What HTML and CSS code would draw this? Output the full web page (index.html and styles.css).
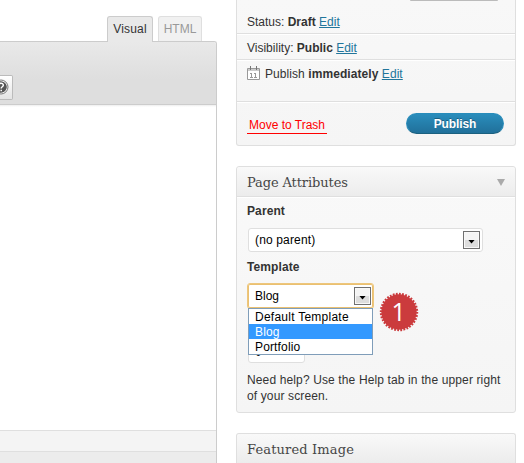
FILE: index.html
```html
<!DOCTYPE html>
<html lang="en">
<head>
<meta charset="utf-8">
<title>Edit Page</title>
<link rel="stylesheet" href="styles.css">
</head>
<body>
<main class="editor-column">
  <nav class="tabs"><a class="tab active">Visual</a><a class="tab">HTML</a></nav>
  <section class="editor">
    <div class="toolbar">
      <button class="help-button" aria-label="Help">
        <svg width="16" height="16" viewBox="0 0 16 16"><circle cx="8" cy="8" r="7" fill="#fff" stroke="#777"/><circle cx="8" cy="8" r="5.8" fill="#555"/><path d="M5.8 6.6c0-3.3 4.6-3 4.5-.3 0 1.5-2.1 1.4-2.1 3.2M8.2 10.8v1.4" fill="none" stroke="#fff" stroke-width="1.5"/></svg>
      </button>
    </div>
    <div class="canvas"></div>
    <div class="path-row"></div>
    <div class="status-row"></div>
  </section>
</main>
<aside class="sidebar">
  <section class="box publish-box">
    <div class="preview-row"><span class="preview-button"></span></div>
    <div class="misc">Status: <b>Draft</b> <a>Edit</a></div>
    <div class="misc">Visibility: <b>Public</b> <a>Edit</a></div>
    <div class="misc schedule">
      <svg class="calendar" width="13" height="14" viewBox="0 0 13 14"><path d="M.5 2.5h12v11H.5z" fill="#fff" stroke="#999"/><path d="M1 3h11v2H1z" fill="#ccc"/><path d="M3.5 0v4M9.5 0v4" stroke="#777"/><path d="M3 7.5h2M4.5 7v4M3 11.5h3M7 7.5h2M8.5 7v4M7 11.5h3" stroke="#999"/></svg>
      <span>Publish <b>immediately</b> <a>Edit</a></span>
    </div>
    <div class="actions"><a class="trash">Move to Trash</a><button class="publish">Publish</button></div>
  </section>
  <section class="box attributes">
    <h3><span class="title-page">Page Attributes</span><i class="toggle"></i></h3>
    <div class="inside">
      <b class="label">Parent</b>
      <div class="select parent"><span>(no parent)</span><i class="arrow"></i></div>
      <b class="label template-label">Template</b>
      <div class="template-area">
        <div class="select template"><span>Blog</span><i class="arrow"></i></div>
        <ul class="options"><li class="default">Default Template</li><li class="selected">Blog</li><li>Portfolio</li></ul>
        <svg class="badge" width="40" height="40" viewBox="-20 -20 40 40"><circle r="17.7" fill="#cb3b3d"/><circle r="18" fill="none" stroke="#cb3b3d" stroke-width="2.4" pathLength="72" stroke-dasharray="1.15 .85"/><text x="-.3" y="8.5" text-anchor="middle">1</text></svg>
      </div>
      <div class="order">0</div>
      <p>Need help? Use the Help tab in the upper right of your screen.</p>
    </div>
  </section>
  <section class="box featured"><h3><span class="title-featured">Featured Image</span></h3></section>
</aside>
</body>
</html>
```
FILE: styles.css
```css
* { box-sizing: border-box; }
body { margin: 0; width: 524px; height: 463px; overflow: hidden; display: flex; gap: 19px; background: #fff; color: #333; font: 12px/16px "Liberation Sans", Arial, sans-serif; }
.editor-column { width: 217px; height: 463px; flex: none; }
.tabs { height: 41px; padding: 16px 15px 0 0; display: flex; justify-content: flex-end; gap: 5px; }
.tab { height: 25px; width: 44px; padding-top: 4px; text-align: center; border: 1px solid #dfdfdf; border-bottom: 0; border-radius: 3px 3px 0 0; background: #f1f1f1; color: #999; }
.tab.active { position: relative; height: 26px; width: 46px; border-color: #ccc; background: #e9e9e9; color: #333; letter-spacing: .2px; }
.editor { height: 422px; border: 1px solid #ccc; border-width: 1px 1px 0 0; border-radius: 0 3px 0 0; }
.toolbar { height: 63px; padding-top: 33px; border-bottom: 1px solid #ccc; background: linear-gradient(#e9e9e9, #dedede 60%); border-radius: 0 2px 0 0; }
.help-button { display: block; width: 13px; height: 25px; padding: 0; border: 1px solid #bbb; border-left: 0; border-radius: 0 2px 2px 0; background: linear-gradient(#fff, #e4e4e4); overflow: hidden; }
.help-button svg { display: block; margin: -1px 0 0 -7.5px; }
.canvas { height: 325px; background: linear-gradient(#eee, #fff 2px); }
.path-row { height: 21px; border-top: 1px solid #dfdfdf; background: #f4f4f4; }
.status-row { height: 12px; border-top: 1px solid #dfdfdf; background: #ececec; }
.sidebar { width: 280px; height: 463px; flex: none; }
.box { border: 1px solid #dfdfdf; border-radius: 3px; background: linear-gradient(#f9f9f9, #f5f5f5); }
.publish-box { height: 146px; border-top: 0; border-radius: 0 0 3px 3px; background: linear-gradient(#f8f8f8, #f5f5f5); }
.preview-row { height: 8px; padding-right: 17px; display: flex; justify-content: flex-end; }
.preview-button { width: 88px; height: 1px; background: #bbb; border-radius: 0 0 5px 5px; }
.misc { height: 26px; padding: 6px 10px 0; border-bottom: 1px solid #dfdfdf; box-shadow: 0 1px #fff; white-space: nowrap; }
a { color: #21759b; }
.misc a { text-decoration: underline; text-underline-offset: 1px; }
.schedule { height: 42px; display: flex; gap: 5px; letter-spacing: .07px; }
.calendar { flex: none; }
.actions { height: 43px; padding: 11px 11px 0 10px; display: flex; justify-content: space-between; }
.trash { width: 80px; height: 17px; margin-top: 4px; padding: 0 2px; color: #f00; border-bottom: 1px solid #f00; white-space: nowrap; }
.publish { width: 98px; height: 21px; padding: 0; border: 1px solid #298cba; border-bottom-color: #1b607f; border-radius: 11px; background: linear-gradient(#2a8dbc, #20709a); color: #fff; font: bold 12px/18px "Liberation Sans", Arial, sans-serif; letter-spacing: -.1px; text-shadow: 0 -1px rgba(0,0,0,.3); }
.attributes { height: 247px; margin-top: 20px; }
h3 { height: 30px; margin: 0; padding: 0 10px; display: flex; justify-content: space-between; border-bottom: 1px solid #dfdfdf; box-shadow: 0 1px #fff; background: linear-gradient(#f9f9f9, #ececec); color: #464646; font: 13px/32px "DejaVu Serif", Georgia, serif; border-radius: 3px 3px 0 0; white-space: nowrap; }
.title-page { letter-spacing: -.1px; }
.title-featured { letter-spacing: .15px; }
.toggle { margin-top: 12px; width: 8px; height: 7px; background: #aaa; clip-path: polygon(0 0, 100% 0, 50% 100%); }
.inside { padding: 6px 10px 0; }
.label { display: block; height: 16px; letter-spacing: .1px; }
.select { display: flex; justify-content: space-between; align-items: center; height: 24px; padding: 0 2px 0 7px; border: 1px solid #dfdfdf; border-radius: 3px; background: #fff; color: #000; }
.parent { width: 235px; margin: 9px 0 0 1px; padding-left: 6px; letter-spacing: .15px; }
.arrow { width: 17px; height: 18px; border: 1px solid #707070; background: linear-gradient(#f4f4f4 50%, #ddd 50%); box-shadow: inset 0 0 0 1px #f8f8f8; display: grid; place-items: center; }
.arrow::after { content: ""; width: 7px; height: 4px; margin-top: 3px; background: #000; clip-path: polygon(0 0, 100% 0, 50% 100%); }
.template-label { margin-top: 7px; }
.template-area { position: relative; margin-top: 8px; height: 55px; }
.select.template { width: 127px; height: 26px; border: 1px solid #edc67c; box-shadow: inset 0 0 0 1px #eac071; }
.options { position: absolute; z-index: 1; left: 1px; top: 25px; width: 125px; height: 47px; margin: 0; padding: 0; list-style: none; border: 1px solid #7f9db9; background: #fff; color: #000; line-height: 15px; }
.options li { height: 15px; padding: 1px 6px 0; letter-spacing: .15px; }
.options .default { letter-spacing: .25px; }
.options .selected { background: #39f; color: #fff; }
.badge { position: absolute; left: 132px; top: 9px; }
.badge text { fill: #fff; font: 25px "Open Sans", sans-serif; }
.order { width: 57px; height: 24px; margin: 1px 0 0 1px; padding: 4px 6px; border: 1px solid #dfdfdf; border-radius: 3px; background: #fff; color: #000; }
p { margin: 9px 0 0; width: 262px; line-height: 16px; letter-spacing: .13px; }
.featured { height: 30px; margin-top: 20px; border-bottom: 0; border-radius: 3px 3px 0 0; }
```
